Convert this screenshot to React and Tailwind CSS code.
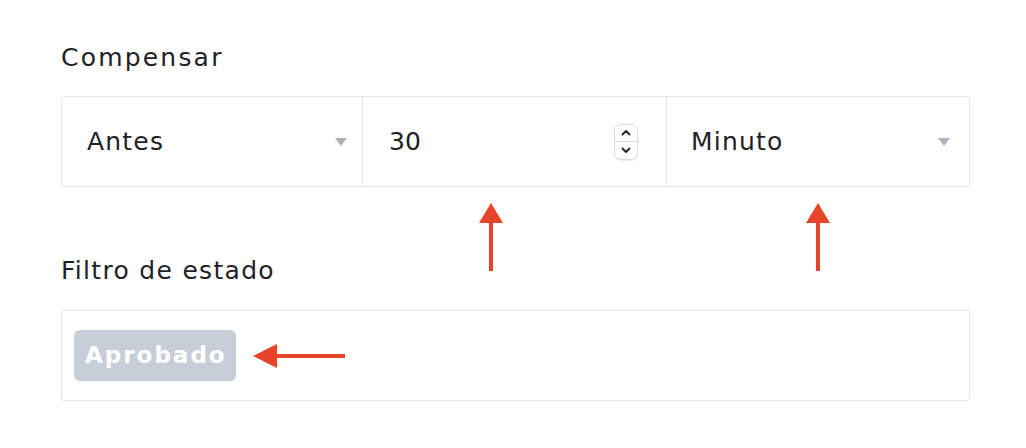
import React from 'react';

const Caret = () => (
  <svg width="12" height="8" viewBox="0 0 12 8" className="shrink-0">
    <path d="M0 0 L12 0 L6 8 Z" fill="#a9b3bb" />
  </svg>
);

const Spinner = () => (
  <div className="w-[24px] h-[36px] rounded-[7px] border border-[#d9dce0] bg-white flex flex-col shadow-[0_1px_1px_rgba(0,0,0,0.08)]">
    <div className="flex-1 flex items-center justify-center border-b border-[#dcdcdc]">
      <svg width="10" height="7" viewBox="0 0 10 7">
        <path d="M1.5 5.5 L5 2 L8.5 5.5" stroke="#222" strokeWidth="1.8" fill="none" strokeLinecap="round" strokeLinejoin="round" />
      </svg>
    </div>
    <div className="flex-1 flex items-center justify-center">
      <svg width="10" height="7" viewBox="0 0 10 7">
        <path d="M1.5 1.5 L5 5 L8.5 1.5" stroke="#222" strokeWidth="1.8" fill="none" strokeLinecap="round" strokeLinejoin="round" />
      </svg>
    </div>
  </div>
);

const ArrowUp = () => (
  <svg width="26" height="68" viewBox="0 0 26 68">
    <path d="M13 0 L25 20 L1 20 Z" fill="#e8432b" />
    <rect x="11" y="18" width="4" height="50" fill="#e8432b" />
  </svg>
);

const ArrowLeft = () => (
  <svg width="92" height="26" viewBox="0 0 92 26">
    <path d="M0 13 L24 1 L24 25 Z" fill="#e8432b" />
    <rect x="22" y="11" width="70" height="4" fill="#e8432b" />
  </svg>
);

export default function App() {
  return (
    <div className="w-[1026px] h-[448px] bg-white pl-[61px] pt-[40px] text-[#1f2226] font-['DejaVu_Sans',sans-serif]">
      <div className="w-[909px]">
        <div className="text-[25px] leading-[36px] tracking-[2.2px]">Compensar</div>

        <div className="mt-[20px] flex h-[91px] border border-[#e3e8ef] rounded-[3px]">
          <div className="w-[301px] flex items-center justify-between pl-[25px] pr-[15px] border-r border-[#e3e8ef]">
            <span className="text-[25px] tracking-[1.2px]">Antes</span>
            <Caret />
          </div>
          <div className="w-[304px] flex items-center justify-between pl-[26px] pr-[28px] border-r border-[#e3e8ef]">
            <span className="text-[25px]">30</span>
            <Spinner />
          </div>
          <div className="flex-1 flex items-center justify-between pl-[24px] pr-[19px]">
            <span className="text-[25px] tracking-[1.2px]">Minuto</span>
            <Caret />
          </div>
        </div>

        <div className="flex h-[70px]">
          <div className="w-[301px]" />
          <div className="w-[304px] flex justify-center pt-[16px]">
            <div className="-ml-[46px]"><ArrowUp /></div>
          </div>
          <div className="w-[302px] flex justify-center pt-[16px]">
            <div className="ml-[2px]"><ArrowUp /></div>
          </div>
        </div>

        <div className="-mt-[4px] text-[25px] leading-[36px] tracking-[1.3px]">Filtro de estado</div>

        <div className="mt-[21px] h-[91px] border border-[#e3e8ef] rounded-[3px] flex items-center pl-[12px]">
          <span className="bg-[#c8ced8] text-white font-bold text-[23px] tracking-[2px] leading-[51px] pl-[11px] pr-[9px] rounded-[6px]">Aprobado</span>
          <div className="ml-[17px]"><ArrowLeft /></div>
        </div>
      </div>
    </div>
  );
}
